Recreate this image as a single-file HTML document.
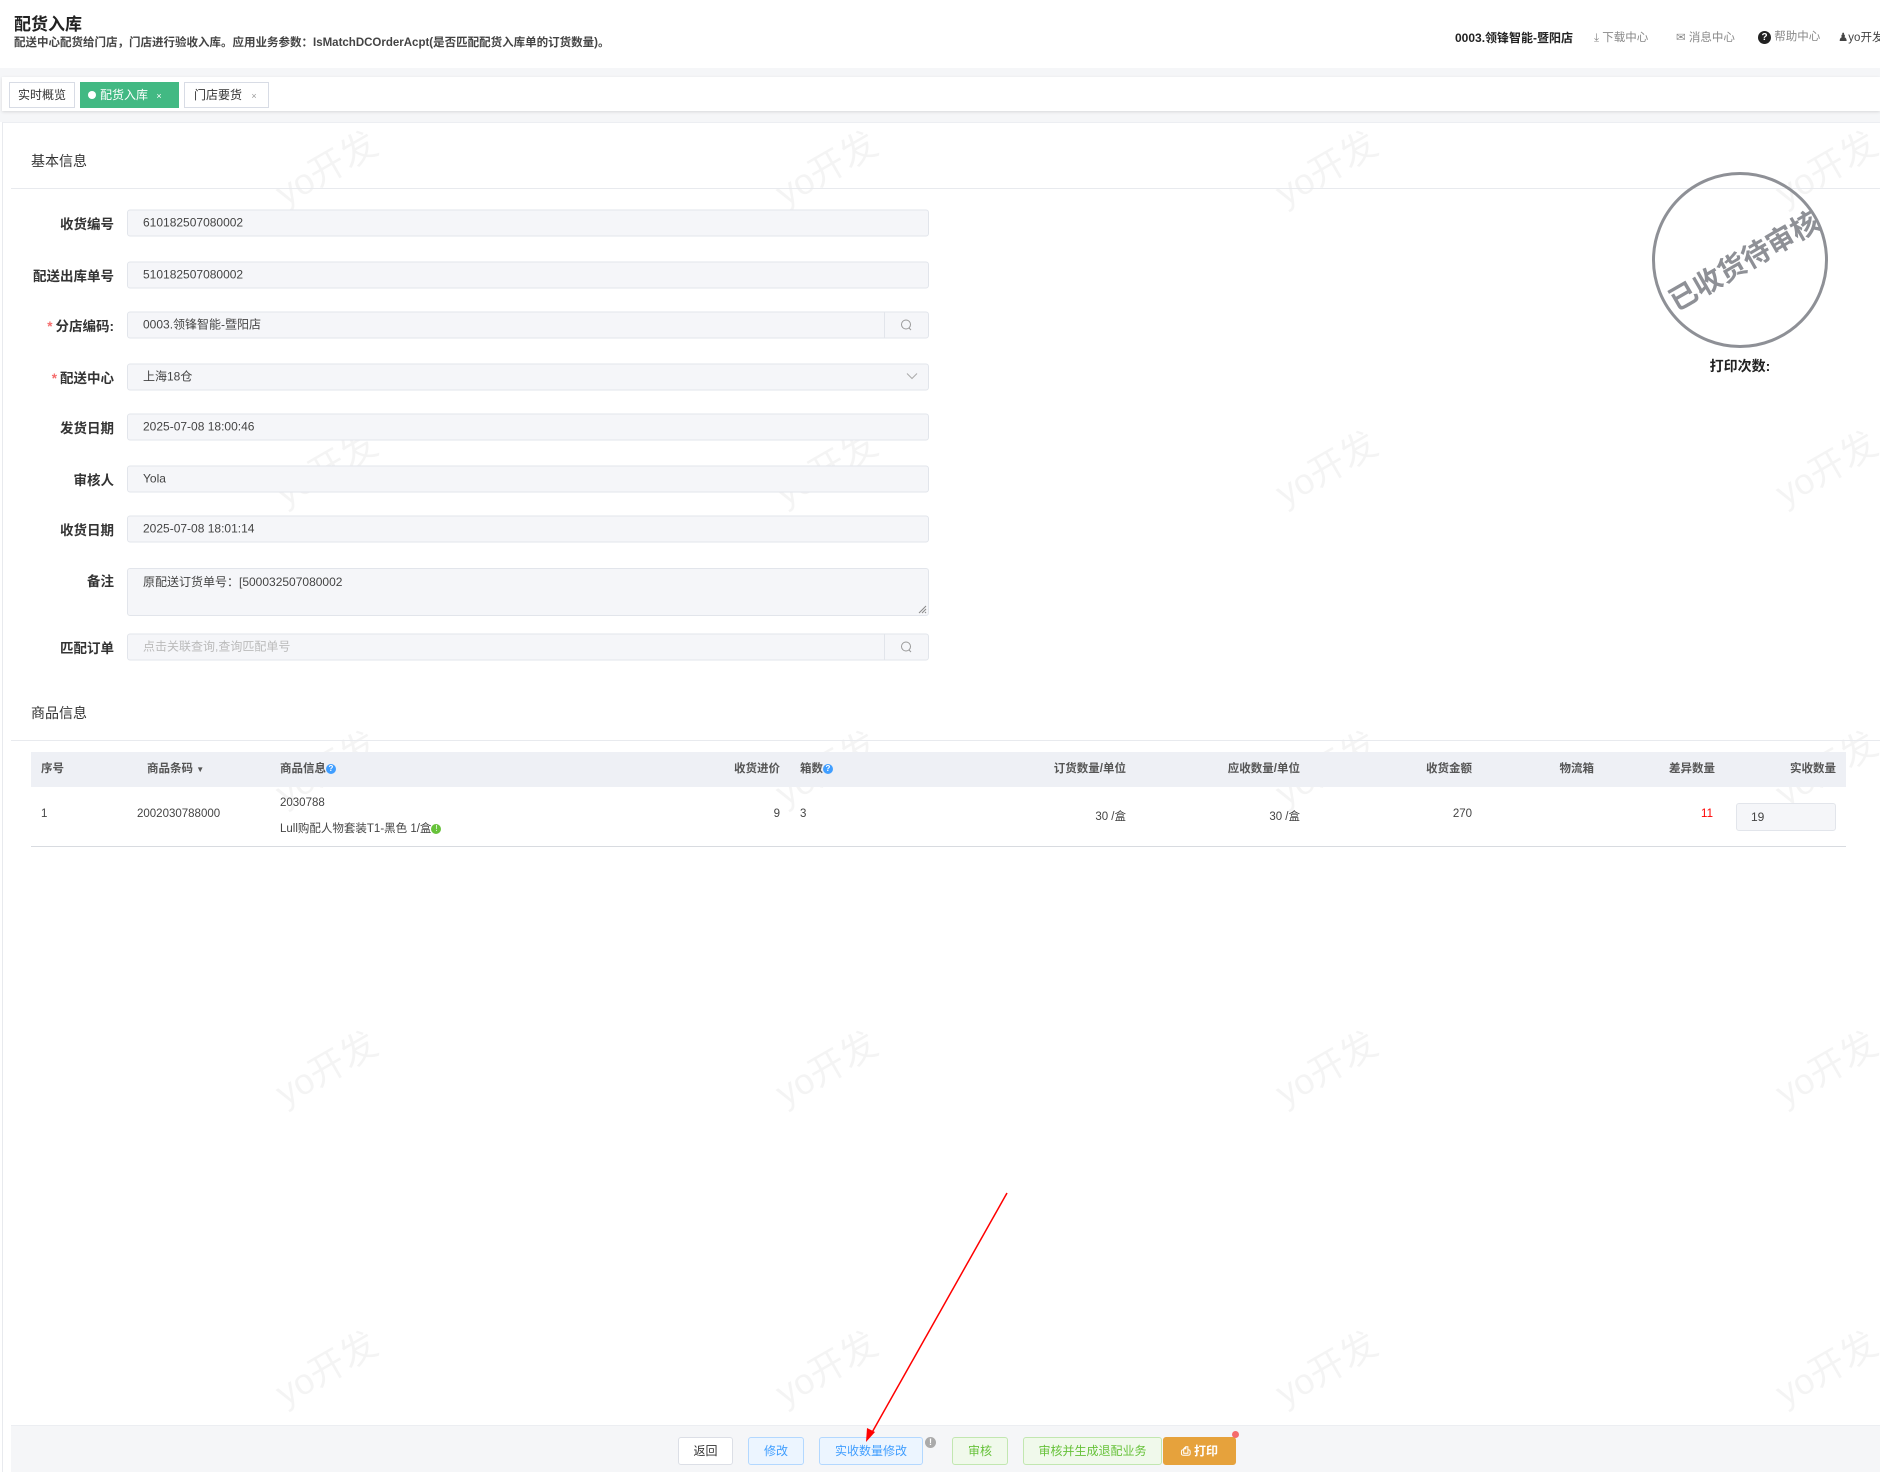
<!DOCTYPE html>
<html><head><meta charset="utf-8">
<style>
*{box-sizing:border-box;margin:0;padding:0}
body{width:1880px;height:1472px;position:relative;overflow:hidden;background:#fff;font-family:"Liberation Sans","Noto Sans CJK SC",sans-serif;color:#333;font-size:12px}
.a{position:absolute;white-space:nowrap}
.lbl{position:absolute;right:1766px;font-size:13.5px;font-weight:bold;color:#333;white-space:nowrap;transform:translateY(-50%)}
.lbl i{color:#f56c6c;font-style:normal;margin-right:3px}
.inp{position:absolute;left:127px;width:802px;height:27px;background:#f5f6f9;border:1px solid #e2e5eb;border-radius:3px;font-size:12px;color:#444;padding-left:15px;line-height:25px;transform:translateY(-50%)}
.sbtn{position:absolute;right:0;top:0;width:44px;height:25px;border-left:1px solid #e2e5eb}
.th{position:absolute;top:760px;font-size:11.5px;font-weight:bold;color:#555;white-space:nowrap}
.td{position:absolute;top:808px;font-size:11.5px;color:#444;white-space:nowrap}
.r{transform:translateX(-100%)}
.btn{position:absolute;top:1437px;height:28px;border-radius:3px;font-size:12px;text-align:center;line-height:26px;border:1px solid;white-space:nowrap}
.wm{position:absolute;font-size:36px;color:rgba(0,0,0,.045);transform:rotate(-30deg);white-space:nowrap}
.q{display:inline-block;width:10px;height:10px;border-radius:50%;background:#409eff;color:#fff;font-size:8px;line-height:10px;text-align:center;vertical-align:middle}
</style></head><body>
<div class="a" style="left:14px;top:10px;font-size:17px;font-weight:bold;color:#222">配货入库</div>
<div class="a" style="left:14px;top:34px;font-size:11.5px;font-weight:bold;color:#444">配送中心配货给门店，门店进行验收入库。应用业务参数：IsMatchDCOrderAcpt(是否匹配配货入库单的订货数量)。</div>
<div class="a" style="left:1455px;top:29px;font-size:12px;font-weight:bold;color:#222">0003.领锋智能-暨阳店</div>
<div class="a" style="left:1594px;top:29px;font-size:11.5px;color:#888">⤓ 下载中心</div>
<div class="a" style="left:1676px;top:29px;font-size:11.5px;color:#888">✉ 消息中心</div>
<div class="a" style="left:1758px;top:28px;font-size:11.5px;color:#888"><span style="display:inline-block;width:13px;height:13px;border-radius:50%;background:#222;color:#fff;font-size:10px;text-align:center;line-height:13px;font-weight:bold">?</span> 帮助中心</div>
<div class="a" style="left:1838px;top:29px;font-size:11.5px;color:#444">&#9823;yo开发</div>

<div class="a" style="left:0;top:68px;width:1880px;height:54px;background:#f5f6f8"></div>
<div class="a" style="left:2px;top:77px;width:1878px;height:34px;background:#fff;box-shadow:0 1px 3px rgba(0,0,0,.12)"></div>
<div class="a" style="left:9px;top:82px;width:66px;height:26px;border:1px solid #d8dce5;font-size:12px;line-height:24px;text-align:center;color:#333">实时概览</div>
<div class="a" style="left:80px;top:82px;width:99px;height:26px;background:#42b983;color:#fff;font-size:12px;line-height:26px;padding-left:8px"><span style="display:inline-block;width:8px;height:8px;border-radius:50%;background:#fff;margin-right:4px"></span>配货入库 <span style="font-size:9px;margin-left:5px">×</span></div>
<div class="a" style="left:184px;top:82px;width:85px;height:26px;border:1px solid #d8dce5;font-size:12px;line-height:24px;padding-left:9px;color:#333">门店要货 <span style="font-size:9px;color:#999;margin-left:6px">×</span></div>

<div class="a" style="left:2px;top:122px;width:1878px;height:1350px;background:#fff;border-left:1px solid #e8eaee;border-top:1px solid #eceef2"></div>

<div class="wm" style="left:270px;top:140px">yo开发</div><div class="wm" style="left:770px;top:140px">yo开发</div><div class="wm" style="left:1270px;top:140px">yo开发</div><div class="wm" style="left:1770px;top:140px">yo开发</div>
<div class="wm" style="left:270px;top:440px">yo开发</div><div class="wm" style="left:770px;top:440px">yo开发</div><div class="wm" style="left:1270px;top:440px">yo开发</div><div class="wm" style="left:1770px;top:440px">yo开发</div>
<div class="wm" style="left:270px;top:740px">yo开发</div><div class="wm" style="left:770px;top:740px">yo开发</div><div class="wm" style="left:1270px;top:740px">yo开发</div><div class="wm" style="left:1770px;top:740px">yo开发</div>
<div class="wm" style="left:270px;top:1040px">yo开发</div><div class="wm" style="left:770px;top:1040px">yo开发</div><div class="wm" style="left:1270px;top:1040px">yo开发</div><div class="wm" style="left:1770px;top:1040px">yo开发</div>
<div class="wm" style="left:270px;top:1340px">yo开发</div><div class="wm" style="left:770px;top:1340px">yo开发</div><div class="wm" style="left:1270px;top:1340px">yo开发</div><div class="wm" style="left:1770px;top:1340px">yo开发</div>

<div class="a" style="left:31px;top:151px;font-size:14px;color:#333">基本信息</div>
<div class="a" style="left:11px;top:188px;width:1869px;height:1px;background:#e8eaee"></div>

<div class="lbl" style="top:223px">收货编号</div><div class="inp" style="top:223px">610182507080002</div>
<div class="lbl" style="top:275px">配送出库单号</div><div class="inp" style="top:275px">510182507080002</div>
<div class="lbl" style="top:325px"><i>*</i>分店编码:</div><div class="inp" style="top:325px">0003.领锋智能-暨阳店<div class="sbtn"><svg width="44" height="25"><circle cx="21" cy="12" r="4.5" fill="none" stroke="#999" stroke-width="1"/><line x1="24" y1="15.5" x2="26" y2="17.5" stroke="#999"/></svg></div></div>
<div class="lbl" style="top:377px"><i>*</i>配送中心</div><div class="inp" style="top:377px">上海18仓<svg class="a" style="right:10px;top:8px" width="12" height="8"><path d="M1 1 L6 6 L11 1" fill="none" stroke="#aaa"/></svg></div>
<div class="lbl" style="top:427px">发货日期</div><div class="inp" style="top:427px">2025-07-08 18:00:46</div>
<div class="lbl" style="top:479px">审核人</div><div class="inp" style="top:479px">Yola</div>
<div class="lbl" style="top:529px">收货日期</div><div class="inp" style="top:529px">2025-07-08 18:01:14</div>
<div class="lbl" style="top:580px">备注</div><div class="inp" style="top:568px;height:48px;transform:none;line-height:16px;padding-top:5px">原配送订货单号：[500032507080002<svg class="a" style="right:1px;bottom:1px" width="10" height="10"><path d="M9 2L2 9M9 5L5 9M9 8L8 9" stroke="#888"/></svg></div>
<div class="lbl" style="top:647px">匹配订单</div><div class="inp" style="top:647px;color:#bbb">点击关联查询,查询匹配单号<div class="sbtn"><svg width="44" height="25"><circle cx="21" cy="12" r="4.5" fill="none" stroke="#999" stroke-width="1"/><line x1="24" y1="15.5" x2="26" y2="17.5" stroke="#999"/></svg></div></div>

<div class="a" style="left:1652px;top:172px;width:176px;height:176px;border-radius:50%;border:3.5px solid #8e9096"></div>
<div class="a" style="left:1660px;top:242px;width:160px;text-align:center;font-size:28px;font-weight:bold;color:#8e9096;transform:rotate(-30deg);white-space:nowrap">已收货待审核</div>
<div class="a" style="left:1700px;top:356px;width:80px;text-align:center;font-size:14px;font-weight:bold;color:#222">打印次数:</div>

<div class="a" style="left:31px;top:703px;font-size:14px;color:#333">商品信息</div>
<div class="a" style="left:11px;top:740px;width:1869px;height:1px;background:#e8eaee"></div>
<div class="a" style="left:31px;top:752px;width:1815px;height:35px;background:#eef0f5"></div>
<div class="a" style="left:31px;top:846px;width:1815px;height:1px;background:#d8dbe0"></div>
<div class="th" style="left:41px">序号</div>
<div class="th" style="left:147px">商品条码 <span style="font-size:8px">▼</span></div>
<div class="th" style="left:280px">商品信息<span class="q">?</span></div>
<div class="th r" style="left:780px">收货进价</div>
<div class="th" style="left:800px">箱数<span class="q">?</span></div>
<div class="th r" style="left:1126px">订货数量/单位</div>
<div class="th r" style="left:1300px">应收数量/单位</div>
<div class="th r" style="left:1472px">收货金额</div>
<div class="th r" style="left:1594px">物流箱</div>
<div class="th r" style="left:1715px">差异数量</div>
<div class="th r" style="left:1836px">实收数量</div>
<div class="td" style="left:41px">1</div>
<div class="td" style="left:137px">2002030788000</div>
<div class="td" style="left:280px;top:797px">2030788</div>
<div class="td" style="left:280px;top:820px">Lull购配人物套装T1-黑色 1/盒<span class="q" style="background:#67c23a">!</span></div>
<div class="td r" style="left:780px">9</div>
<div class="td" style="left:800px">3</div>
<div class="td r" style="left:1126px">30 /盒</div>
<div class="td r" style="left:1300px">30 /盒</div>
<div class="td r" style="left:1472px">270</div>
<div class="td r" style="left:1713px;color:#f00">11</div>
<div class="a" style="left:1736px;top:803px;width:100px;height:28px;background:#f5f6f9;border:1px solid #e2e5eb;border-radius:3px;padding-left:14px;line-height:26px;font-size:12px;color:#444">19</div>

<div class="a" style="left:11px;top:1425px;width:1869px;height:47px;background:#f5f6f8;border-top:1px solid #eceef2"></div>
<div class="btn" style="left:678px;width:55px;background:#fff;border-color:#dcdfe6;color:#333">返回</div>
<div class="btn" style="left:748px;width:56px;background:#ecf5ff;border-color:#b3d8ff;color:#409eff">修改</div>
<div class="btn" style="left:819px;width:104px;background:#ecf5ff;border-color:#b3d8ff;color:#409eff">实收数量修改</div>
<div class="a" style="left:925px;top:1437px;width:11px;height:11px;border-radius:50%;background:#aaa;color:#fff;font-size:9px;line-height:11px;text-align:center;font-weight:bold">!</div>
<div class="btn" style="left:952px;width:56px;background:#f0f9eb;border-color:#c2e7b0;color:#67c23a">审核</div>
<div class="btn" style="left:1023px;width:139px;background:#f0f9eb;border-color:#c2e7b0;color:#67c23a">审核并生成退配业务</div>
<div class="btn" style="left:1163px;width:73px;background:#e6a23c;border-color:#e6a23c;color:#fff;font-weight:bold">⎙ 打印</div>
<div class="a" style="left:1232px;top:1431px;width:7px;height:7px;border-radius:50%;background:#f56c6c"></div>

<svg class="a" style="left:0;top:0" width="1880" height="1472"><line x1="1007" y1="1193" x2="870" y2="1436" stroke="#f00" stroke-width="1.5"/><path d="M866 1442 L867 1428 L875 1432 Z" fill="#f00"/></svg>
</body></html>
